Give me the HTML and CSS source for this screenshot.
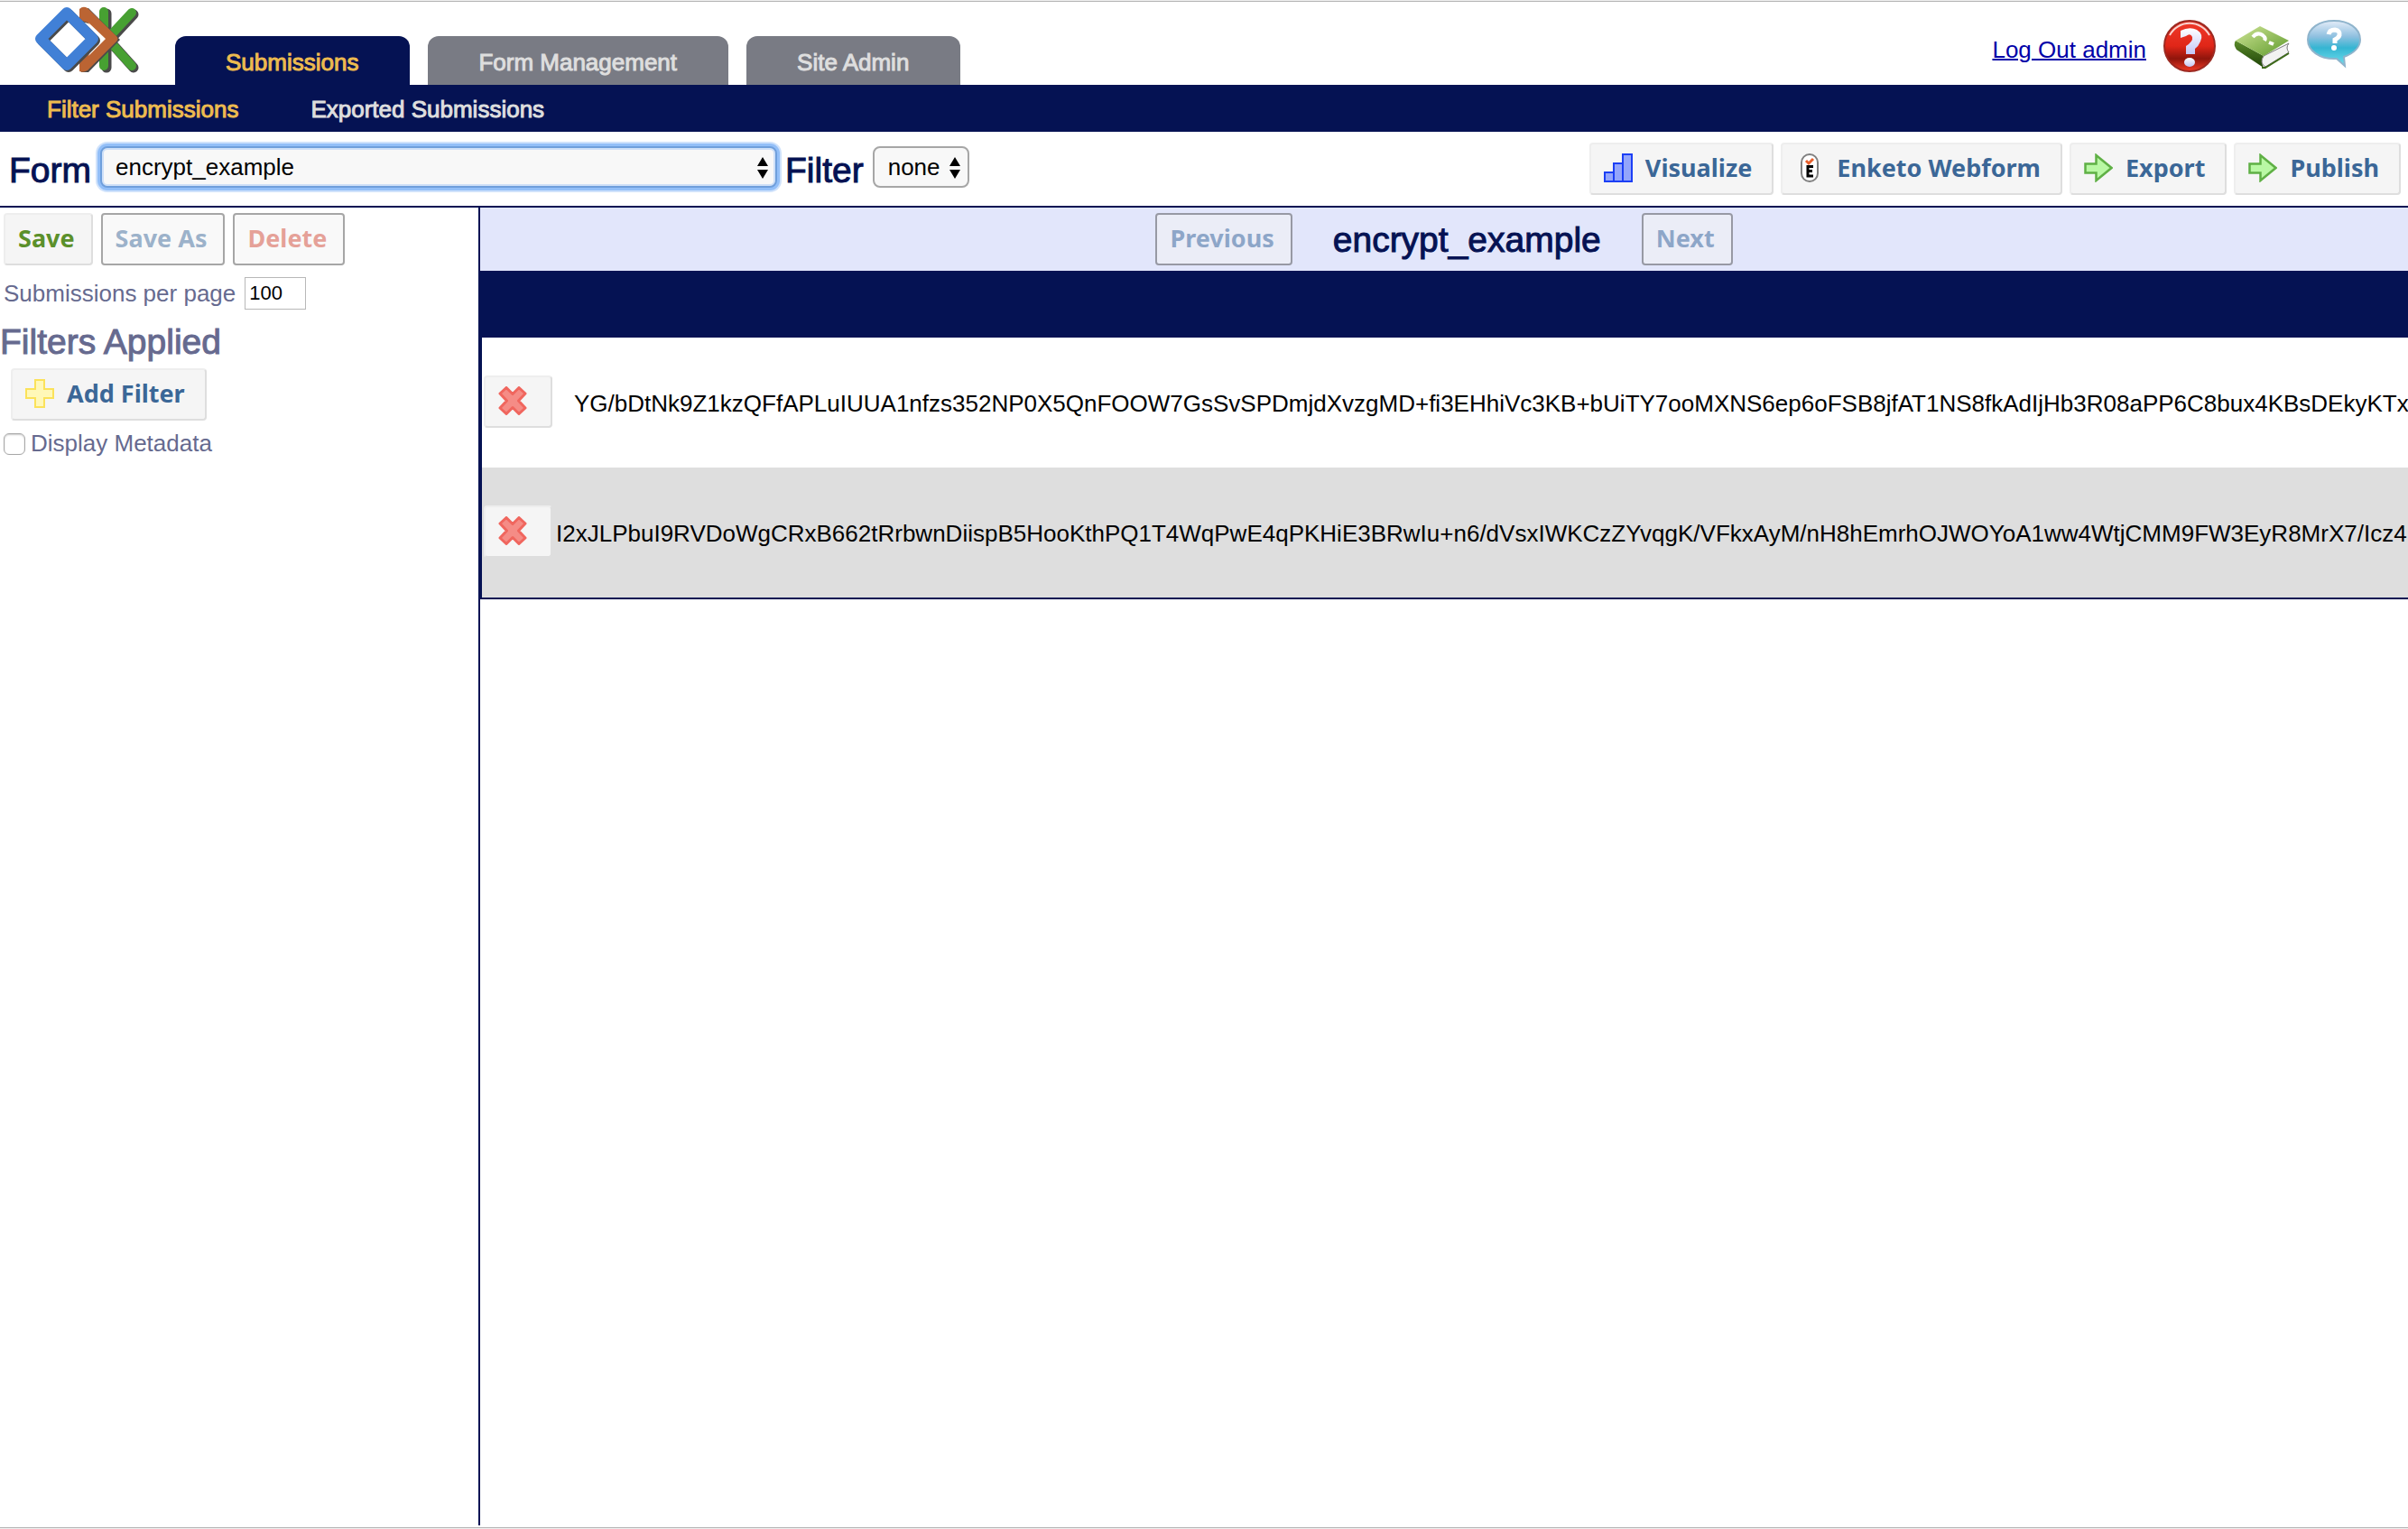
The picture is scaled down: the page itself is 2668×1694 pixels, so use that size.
FILE: index.html
```html
<!DOCTYPE html>
<html lang="en">
<head>
<meta charset="utf-8">
<title>ODK Aggregate</title>
<link rel="stylesheet" href="styles.css">
</head>
<body>
<svg class="defs" width="0" height="0" aria-hidden="true">
  <defs>
    <linearGradient id="red" x1="0" y1="0" x2="0" y2="1"><stop offset="0" stop-color="#f03a2a"/><stop offset=".5" stop-color="#e02618"/><stop offset=".75" stop-color="#8f150c"/><stop offset="1" stop-color="#f23a26"/></linearGradient>
    <linearGradient id="mark" x1="0" y1="0" x2="0" y2="1"><stop offset="0" stop-color="#fff"/><stop offset="1" stop-color="#c3c6f6"/></linearGradient>
    <linearGradient id="cover" x1="0" y1="0" x2="1" y2="1"><stop offset="0" stop-color="#cfe596"/><stop offset="1" stop-color="#5f9a2c"/></linearGradient>
    <linearGradient id="spine" x1="0" y1="0" x2="0" y2="1"><stop offset="0" stop-color="#5b8a2a"/><stop offset="1" stop-color="#1e4407"/></linearGradient>
    <linearGradient id="bubble" x1="0" y1="0" x2="0" y2="1"><stop offset="0" stop-color="#e4ecf8"/><stop offset=".35" stop-color="#8fc0e0"/><stop offset=".6" stop-color="#35b5d2"/><stop offset="1" stop-color="#6fe0ee"/></linearGradient>
    <symbol id="arrow" viewBox="0 0 32 32"><path d="M1.500 11.500H13.500V2L30.500 16L13.500 30V21.500H1.500Z" fill="#b9f8a4" stroke="#5fb045" stroke-width="2.500"/></symbol>
    <symbol id="cross" viewBox="0 0 32 32"><path d="M9 1.500L16 8.500L23 1.500L30 8L22.500 16L30 24L23 30.500L16 23.500L9 30.500L2 24L9.500 16L2 8Z" fill="#f58c86" stroke="#f0665e" stroke-width="3" stroke-linejoin="round"/></symbol>
    <symbol id="updown" viewBox="0 0 12 24"><path d="M6 0L12 10H0ZM0 14H12L6 24Z" fill="#000"/></symbol>
  </defs>
</svg>

<header class="masthead">
  <svg class="logo" viewBox="0 0 116 74" role="img" aria-label="ODK">
    <g fill="none" stroke="#4a4a4a" stroke-width="11" stroke-linecap="round" stroke-linejoin="round">
      <path d="M80 8V68M110 9L83 38L110 68"/>
    </g>
    <g fill="none" stroke="#47a032" stroke-width="10" stroke-linecap="round" stroke-linejoin="round">
      <path d="M77 6V66M108 7L81 36L108 66"/>
    </g>
    <path d="M52 4L60 2L95 37L60 73L52 73V60L64 54L80 37L64 20L52 17Z" fill="#4a4a4a"/>
    <path d="M50 3Q54 -1 59 2L91 33Q94 36 91 39L59 71Q54 74 50 72V58L59 54L77 36L59 18L50 15Z" fill="#bb6433"/>
    <path d="M60 18L79 36L60 55L64 46L72 36L64 26Z" fill="#fff"/>
    <path d="M9 38L38 9L67 38L38 67Z" fill="none" stroke="#4a4a4a" stroke-width="12" stroke-linejoin="round"/>
    <path d="M7 36L36 7L65 36L36 65Z" fill="none" stroke="#4180d6" stroke-width="12" stroke-linejoin="round"/>
  </svg>
  <nav class="tabs" aria-label="Main">
    <a class="tab active" href="#submissions">Submissions</a>
    <a class="tab" href="#forms">Form Management</a>
    <a class="tab" href="#admin">Site Admin</a>
  </nav>
  <div class="account">
    <a class="logout" href="#logout">Log Out admin</a>
    <a class="help" href="#help" aria-label="Help">
      <svg width="60" height="60" viewBox="0 0 60 60"><circle cx="30" cy="30" r="28" fill="url(#red)" stroke="#9c2a22" stroke-width="2"/><path d="M8 18A25 25 0 0 1 52 18" fill="none" stroke="#f8d4d0" stroke-width="2"/><path d="M20 13Q30 8 38 12Q46 17 42 25Q40 30 36 33V39H26V30Q34 25 33 20Q31 15 26 19L20 21Z" fill="url(#mark)"/><ellipse cx="30" cy="48" rx="6" ry="5" fill="url(#mark)"/></svg>
    </a>
    <a class="help" href="#docs" aria-label="Documentation">
      <svg width="64" height="60" viewBox="0 0 64 60"><path d="M3 24L34 41Q30 46 34 54L4 34Q0 28 3 24Z" fill="url(#spine)"/><path d="M34 41L62 27Q58 32 62 37L36 53Q29 49 34 41Z" fill="#f2f2f2" stroke="#777" stroke-width="1"/><path d="M32 54L36 54L62 38" fill="none" stroke="#3c6a18" stroke-width="2"/><path d="M3 24L30 8L62 24L34 41Z" fill="url(#cover)"/><path d="M22 20Q27 14 33 18Q37 21 35 24M40 26L45 28" fill="none" stroke="#fff" stroke-width="4"/></svg>
    </a>
    <a class="help" href="#forum" aria-label="Forum">
      <svg width="60" height="60" viewBox="0 0 60 60"><path d="M30 2C46 2 59 10 59 23C59 31 52 38 41 42L42 52L33 44C14 45 1 35 1 23C1 10 14 2 30 2Z" fill="url(#bubble)" stroke="#8fb4cc" stroke-width="2"/><path d="M24 17Q25 12 31 12Q37 13 36 18Q35 21 31 23V27" fill="none" stroke="#fff" stroke-width="5"/><circle cx="30" cy="32" r="3" fill="#fff"/></svg>
    </a>
  </div>
</header>

<nav class="subnav" aria-label="Submissions">
  <a class="active" href="#filter">Filter Submissions</a>
  <a href="#exported">Exported Submissions</a>
</nav>

<section class="toolbar">
  <label class="heading" for="form">Form</label>
  <span class="picker picker-form">
    <select id="form"><option>encrypt_example</option></select>
    <svg class="updown"><use href="#updown"/></svg>
  </span>
  <label class="heading" for="filter">Filter</label>
  <span class="picker">
    <select id="filter"><option>none</option></select>
    <svg class="updown"><use href="#updown"/></svg>
  </span>
  <div class="actions">
    <button class="btn" type="button"><svg class="icon" viewBox="0 0 32 32"><g fill="#93a5fb" stroke="#1c3ff5" stroke-width="2"><path d="M1 21H11V31H1ZM11 11H21V31H11ZM21 1H31V31H21Z"/></g></svg>Visualize</button>
    <button class="btn" type="button"><svg class="icon" viewBox="0 0 32 32"><rect x="7" y="1" width="18" height="30" rx="9" fill="#fff" stroke="#808080" stroke-width="2"/><path d="M12 8L15 11L20 6" fill="none" stroke="#e8602c" stroke-width="3"/><path d="M20 14.500H14V25H20M14 19.500H19" fill="none" stroke="#000" stroke-width="3"/></svg>Enketo Webform</button>
    <button class="btn" type="button"><svg class="icon"><use href="#arrow"/></svg>Export</button>
    <button class="btn" type="button"><svg class="icon"><use href="#arrow"/></svg>Publish</button>
  </div>
</section>

<main class="workspace">
  <aside class="sidebar">
    <div class="row buttons">
      <button class="btn plain save" type="button">Save</button>
      <button class="btn plain" type="button" disabled>Save As</button>
      <button class="btn plain delete" type="button" disabled>Delete</button>
    </div>
    <div class="row per-page">
      <label for="per-page">Submissions per page</label>
      <input id="per-page" type="text" value="100">
    </div>
    <h2 class="heading">Filters Applied</h2>
    <button class="btn add" type="button"><svg class="icon" viewBox="0 0 32 32"><path d="M11 1H21V11H31V21H21V31H11V21H1V11H11Z" fill="#fff8b8" stroke="#fbe25a" stroke-width="2"/></svg>Add Filter</button>
    <div class="row metadata">
      <input id="metadata" type="checkbox">
      <label for="metadata">Display Metadata</label>
    </div>
  </aside>

  <section class="results">
    <div class="pager">
      <button class="btn plain" type="button" disabled>Previous</button>
      <h1 class="heading">encrypt_example</h1>
      <button class="btn plain" type="button" disabled>Next</button>
    </div>
    <table class="submissions">
      <thead><tr><th></th><th></th></tr></thead>
      <tbody>
        <tr><td><button class="btn remove" type="button" aria-label="Delete submission"><svg class="icon"><use href="#cross"/></svg></button></td><td>YG/bDtNk9Z1kzQFfAPLuIUUA1nfzs352NP0X5QnFOOW7GsSvSPDmjdXvzgMD+fi3EHhiVc3KB+bUiTY7ooMXNS6ep6oFSB8jfAT1NS8fkAdIjHb3R08aPP6C8bux4KBsDEkyKTxT</td></tr>
        <tr><td><button class="btn remove" type="button" aria-label="Delete submission"><svg class="icon"><use href="#cross"/></svg></button></td><td>I2xJLPbuI9RVDoWgCRxB662tRrbwnDiispB5HooKthPQ1T4WqPwE4qPKHiE3BRwIu+n6/dVsxIWKCzZYvqgK/VFkxAyM/nH8hEmrhOJWOYoA1ww4WtjCMM9FW3EyR8MrX7/Icz4</td></tr>
      </tbody>
    </table>
  </section>
</main>
<footer class="edge"></footer>
</body>
</html>
```

FILE: styles.css
```css
* {
  box-sizing: border-box;
}

body {
  --navy: #051253;
  --slate: #666a8f;
  display: flex;
  flex-direction: column;
  min-height: 100vh;
  margin: 0;
  border-top: 1px solid #efefef;
  background: #fff;
  color: #000;
  font: 26px/30px "Liberation Sans", Arial, sans-serif;
}

.defs {
  position: absolute;
}

.heading {
  margin: 0;
  padding-top: 2px;
  color: var(--navy);
  font-size: 39px;
  font-weight: 400;
  line-height: 42px;
  -webkit-text-stroke: 1px currentColor;
}

/* Masthead */
.masthead {
  display: flex;
  align-items: flex-end;
  height: 93px;
  padding: 0 52px 0 38px;
  border-top: 1px solid #b4b4b4;
}

.logo {
  align-self: flex-start;
  width: 116px;
  height: 74px;
  margin-top: 5px;
}

.tabs {
  display: flex;
  gap: 20px;
  margin-left: 40px;
}

.tab {
  height: 54px;
  padding: 14px 57px 0 56px;
  border-radius: 12px 12px 0 0;
  background: #797b84;
}

.tab,
.subnav a {
  color: #dedede;
  text-decoration: none;
  -webkit-text-stroke: 1px currentColor;
}

.tab.active {
  background: var(--navy);
}

.tab.active,
.subnav a.active {
  color: #edbb4f;
}

.account {
  display: flex;
  align-items: center;
  gap: 18px;
  margin-left: auto;
  padding-bottom: 13px;
}

.logout {
  margin-top: 8px;
  color: #0000a8;
  text-decoration-thickness: 2px;
}

.help {
  display: flex;
}

.subnav {
  display: flex;
  gap: 80px;
  height: 52px;
  padding: 12px 52px 0;
  background: var(--navy);
}

/* Buttons */
.btn {
  display: inline-flex;
  align-items: center;
  gap: 14px;
  height: 58px;
  padding: 0 22px 2px 14px;
  border: 2px solid;
  border-color: #eee #dedede #dedede #eee;
  border-radius: 4px;
  background: #f5f5f5;
  color: #3b6797;
  font: 700 27px/32px "Noto Sans", "Open Sans", sans-serif;
  white-space: nowrap;
}

.btn.plain {
  padding-right: 18px;
}

.btn:disabled {
  border-color: #4f4f4f;
  opacity: .5;
}

.btn.save {
  color: #5b902b;
}

.btn.delete {
  color: #cc4633;
}

.icon {
  flex: none;
  width: 32px;
  height: 32px;
}

/* Toolbar */
.toolbar {
  display: flex;
  align-items: center;
  height: 84px;
  padding: 0 8px 0 10px;
  border-bottom: 2px solid var(--navy);
}

.toolbar .heading {
  padding-top: 4px;
}

.picker {
  position: relative;
  display: flex;
  margin: 0 9px 4px 10px;
}

.picker select {
  appearance: none;
  width: 100%;
  height: 46px;
  margin: 0;
  padding: 0 30px 0 15px;
  border: 2px solid #a6a6a6;
  border-radius: 8px;
  outline: none;
  background: #f8f8f8;
  color: #000;
  font: inherit;
}

.picker-form {
  width: calc(28% + 8px);
}

.picker-form select {
  border-color: #6f9fdc;
  box-shadow: 0 0 0 3px #93bff8, 0 0 0 5px #cfe2fb, inset 0 0 0 2px #cfe0f8;
}

.updown {
  position: absolute;
  top: 12px;
  right: 10px;
  width: 12px;
  height: 24px;
  pointer-events: none;
}

.actions {
  display: flex;
  gap: 8px;
  margin-left: auto;
}

/* Workspace */
.workspace {
  display: flex;
  flex: 1;
  overflow: hidden;
}

.sidebar {
  flex: none;
  width: 530px;
  color: var(--slate);
}

.sidebar .heading {
  color: var(--slate);
}

.row {
  display: flex;
  align-items: center;
  padding-left: 4px;
}

.buttons {
  gap: 9px;
  padding-top: 6px;
}

.per-page {
  gap: 10px;
  height: 62px;
}

.per-page input {
  width: 68px;
  height: 36px;
  padding: 0 4px;
  border: 1px solid #b8b8b8;
  font: 22px/30px "Liberation Sans", Arial, sans-serif;
}

.add {
  margin: 8px 0 0 12px;
}

.metadata {
  gap: 6px;
  height: 50px;
}

.metadata input {
  appearance: none;
  width: 24px;
  height: 24px;
  margin: 2px 0 0;
  border: 1px solid #a8a8a8;
  border-radius: 6px;
  background: #fff;
  box-shadow: inset 0 1px 2px #ccc;
}

.results {
  flex: 1;
  min-width: 0;
  border-left: 2px solid var(--navy);
}

.pager {
  display: flex;
  align-items: center;
  justify-content: center;
  gap: 45px;
  height: 70px;
  background: #e2e6fb;
}

.submissions {
  width: 100%;
  border: 2px solid var(--navy);
  border-top: 0;
  border-right: 0;
  border-spacing: 0;
}

.submissions th {
  height: 74px;
  padding: 0;
  background: var(--navy);
}

.submissions td {
  height: 144px;
  padding: 0 0 2px 2px;
  white-space: nowrap;
}

.submissions td + td {
  padding: 2px 0 0 24px;
}

.submissions tr:nth-child(even) td {
  background: #dedede;
}

.submissions tr:nth-child(even) td + td {
  padding-left: 4px;
}

.remove {
  display: flex;
  width: 76px;
}

.edge {
  height: 4px;
  border-bottom: 1px solid #efefef;
  box-shadow: inset 0 -1px #b4b4b4;
}
```
